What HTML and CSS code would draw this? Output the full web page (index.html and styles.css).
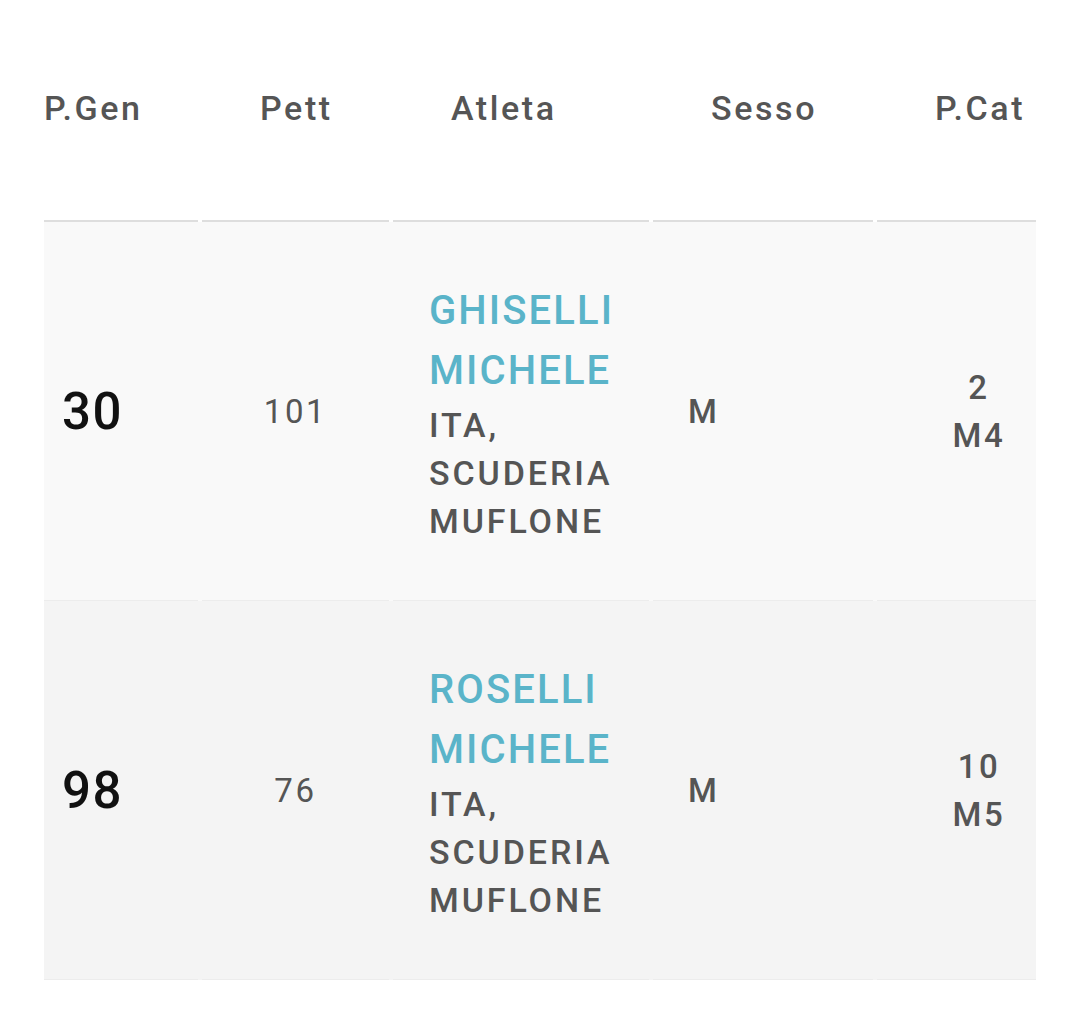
FILE: index.html
```html
<!DOCTYPE html>
<html lang="it">
<head>
<meta charset="utf-8">
<title>Classifica</title>
<link rel="stylesheet" href="styles.css">
</head>
<body>
<div class="table">
  <div class="row head">
    <div class="cell h h1">P.Gen</div>
    <div class="cell h">Pett</div>
    <div class="cell h">Atleta</div>
    <div class="cell h">Sesso</div>
    <div class="cell h">P.Cat</div>
  </div>
  <div class="row body odd">
    <div class="cell pos">30</div>
    <div class="cell pett">101</div>
    <div class="cell athlete">
      <div class="name">GHISELLI<br>MICHELE</div>
      <div class="club">ITA,<br>SCUDERIA<br>MUFLONE</div>
    </div>
    <div class="cell sex">M</div>
    <div class="cell cat">2<br>M4</div>
  </div>
  <div class="row body even">
    <div class="cell pos">98</div>
    <div class="cell pett">76</div>
    <div class="cell athlete">
      <div class="name">ROSELLI<br>MICHELE</div>
      <div class="club">ITA,<br>SCUDERIA<br>MUFLONE</div>
    </div>
    <div class="cell sex">M</div>
    <div class="cell cat">10<br>M5</div>
  </div>
</div>
</body>
</html>
```

FILE: styles.css
```css
html, body {
  margin: 0;
  padding: 0;
  background: #ffffff;
}

body {
  font-family: Roboto, "Noto Sans", "Liberation Sans", sans-serif;
  color: #555555;
}

.table {
  margin-left: 44px;
  width: 992px;
}

.row {
  display: grid;
  grid-template-columns: 154px 187px 256px 220px 159px;
  column-gap: 4px;
}

.cell {
  display: flex;
  align-items: center;
}

.head .cell {
  height: 216px;
  padding-bottom: 4px;
  border-bottom: 2px solid #dedede;
  font-size: 34px;
  font-weight: 500;
  letter-spacing: 2.6px;
  padding-left: 58px;
  box-sizing: content-box;
}

.head .h1 {
  padding-left: 0;
}

.body {
  height: 379px;
}

.body .cell {
  border-bottom: 1px solid #ececec;
  box-sizing: border-box;
  font-size: 33px;
  letter-spacing: 2.6px;
}

.odd { background: #f9f9f9; }
.even { background: #f4f4f4; }

.pos {
  padding-left: 18px;
  font-size: 51px !important;
  font-weight: 500;
  color: #111111;
  letter-spacing: 1.4px !important;
}

.pett {
  justify-content: center;
  font-weight: 400;
}

.athlete {
  flex-direction: column;
  align-items: flex-start !important;
  justify-content: center;
  padding-left: 36px;
  padding-top: 4px;
}

.name {
  font-size: 40px;
  line-height: 60px;
  font-weight: 500;
  color: #5ab4c9;
  letter-spacing: 2.1px;
}

.club {
  font-size: 34px;
  line-height: 48px;
  font-weight: 500;
  letter-spacing: 2.9px;
}

.sex {
  padding-left: 35px;
  font-weight: 500;
}

.cat {
  justify-content: center;
  text-align: center;
  padding-left: 45px;
  padding-top: 2px;
  line-height: 48px;
  font-weight: 500;
}
```
